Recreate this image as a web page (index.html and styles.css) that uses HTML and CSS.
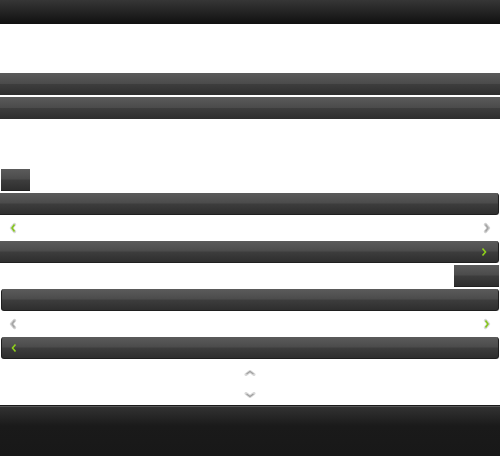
FILE: index.html
```html
<!DOCTYPE html>
<html>
<head>
<meta charset="utf-8">
<link rel="stylesheet" href="styles.css">
</head>
<body>
<div class="page">
  <div class="header"></div>
  <div class="bar first"></div>
  <div class="bar second"></div>
  <div class="btn btn-left"></div>
  <div class="bar rbar b3"></div>
  <div class="arrow-row">
    <svg class="ico" width="8" height="12" viewBox="0 0 8 12"><path d="M5.5 2.5 L2.5 6 L5.5 9.5" fill="none" stroke="#bdbdbd" stroke-width="3.4" stroke-linejoin="round" stroke-linecap="round" opacity="0.6"/><path d="M5.5 2.5 L3 6 L5.5 9.5" fill="none" stroke="#86c81c" stroke-width="1.6"/></svg>
    <svg class="ico" width="8" height="12" viewBox="0 0 8 12"><path d="M2.5 2.5 L5.5 6 L2.5 9.5" fill="none" stroke="#d0d0d0" stroke-width="3.4" stroke-linejoin="round" stroke-linecap="round"/><path d="M2.5 2.5 L5 6 L2.5 9.5" fill="none" stroke="#a4a4a4" stroke-width="1.4"/></svg>
  </div>
  <div class="bar rbar b4">
    <span></span>
    <svg class="ico" width="8" height="12" viewBox="0 0 8 12"><path d="M2.5 2.5 L5.5 6 L2.5 9.5" fill="none" stroke="#8fd11b" stroke-width="1.6"/></svg>
  </div>
  <div class="btn btn-right"></div>
  <div class="bar rbar b5"></div>
  <div class="arrow-row">
    <svg class="ico" width="8" height="12" viewBox="0 0 8 12"><path d="M5.5 2.5 L2.5 6 L5.5 9.5" fill="none" stroke="#d0d0d0" stroke-width="3.4" stroke-linejoin="round" stroke-linecap="round"/><path d="M5.5 2.5 L3 6 L5.5 9.5" fill="none" stroke="#a4a4a4" stroke-width="1.4"/></svg>
    <svg class="ico" width="8" height="12" viewBox="0 0 8 12"><path d="M2.5 2.5 L5.5 6 L2.5 9.5" fill="none" stroke="#bdbdbd" stroke-width="3.4" stroke-linejoin="round" stroke-linecap="round" opacity="0.6"/><path d="M2.5 2.5 L5 6 L2.5 9.5" fill="none" stroke="#86c81c" stroke-width="1.6"/></svg>
  </div>
  <div class="bar rbar b6">
    <svg class="ico" width="8" height="12" viewBox="0 0 8 12"><path d="M5.5 2.5 L2.5 6 L5.5 9.5" fill="none" stroke="#8fd11b" stroke-width="1.6"/></svg>
  </div>
  <div class="vert">
    <svg class="vico" width="12" height="7" viewBox="0 0 12 7"><path d="M2 5.5 L6 2.5 L10 5.5" fill="none" stroke="#d8d8d8" stroke-width="3" stroke-linecap="round" stroke-linejoin="round"/><path d="M2.5 5 L6 2.5 L9.5 5" fill="none" stroke="#a0a0a0" stroke-width="1.2"/></svg>
    <svg class="vico" width="12" height="7" viewBox="0 0 12 7"><path d="M2 1.5 L6 4.5 L10 1.5" fill="none" stroke="#d8d8d8" stroke-width="3" stroke-linecap="round" stroke-linejoin="round"/><path d="M2.5 2 L6 4.5 L9.5 2" fill="none" stroke="#a0a0a0" stroke-width="1.2"/></svg>
  </div>
  <div class="footer"></div>
</div>
</body>
</html>
```
FILE: styles.css
```css
html, body {
  margin: 0;
  padding: 0;
  background: #ffffff;
  font-family: "Liberation Sans", Arial, sans-serif;
}
.page {
  width: 500px;
  height: 456px;
  display: flex;
  flex-direction: column;
  overflow: hidden;
}
.header {
  height: 24px;
  flex: none;
  background: linear-gradient(#363636, #101010);
}
.bar {
  height: 22px;
  flex: none;
  background: linear-gradient(#5b5b5b 0%, #4b4b4b 48%, #3d3d3d 52%, #2e2e2e 100%);
  display: flex;
  align-items: center;
  box-sizing: border-box;
}
.first { margin-top: 49px; }
.second { margin-top: 2px; }
.btn {
  height: 22px;
  flex: none;
  box-sizing: border-box;
  background: linear-gradient(#5b5b5b 0%, #4b4b4b 48%, #3d3d3d 52%, #2e2e2e 100%);
  border-bottom: 1px solid #222;
}
.btn-left {
  margin-top: 50px;
  margin-left: 1px;
  width: 29px;
}
.btn-right {
  margin-top: 2px;
  margin-left: 454px;
  width: 45px;
}
.rbar {
  border-radius: 0 3px 3px 0;
  border-bottom: 1px solid #1f1f1f;
  border-right: 1px solid #1f1f1f;
  width: 499px;
}
.b3 { margin-top: 2px; }
.b4 { justify-content: space-between; padding-right: 10px; }
.b5 { margin-top: 2px; margin-left: 1px; width: 498px; border-radius: 3px; border-left: 1px solid #1f1f1f; }
.b6 { margin-left: 1px; width: 498px; border-radius: 3px; border-left: 1px solid #1f1f1f; padding-left: 8px; }
.arrow-row {
  height: 26px;
  flex: none;
  display: flex;
  justify-content: space-between;
  align-items: center;
  padding: 0 9px 0 9px;
  box-sizing: border-box;
  width: 500px;
}
.ico { display: block; flex: none; }
.vert {
  height: 46px;
  flex: none;
  display: flex;
  flex-direction: column;
  align-items: center;
  padding-top: 10px;
  box-sizing: border-box;
  gap: 16px;
}
.vico { display: block; }
.footer {
  flex: 1;
  border-top: 1px solid #1a1a1a;
  box-shadow: inset 0 1px 0 #585858;
  background: linear-gradient(#333 0px, #1a1a1a 20px, #181818 100%);
}
```
